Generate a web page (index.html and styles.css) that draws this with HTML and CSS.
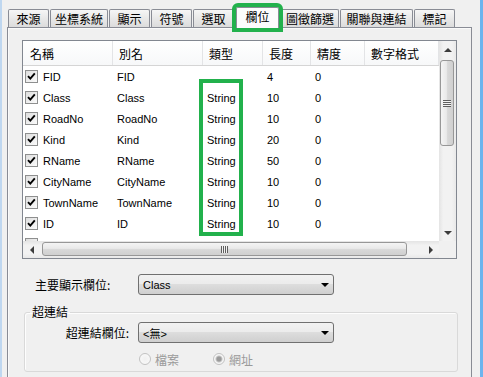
FILE: index.html
```html
<!DOCTYPE html>
<html lang="zh-Hant">
<head>
  <meta charset="UTF-8" />
  <title>圖層屬性 - 欄位</title>
  <link rel="stylesheet" href="styles.css">
</head>
<body>

  <div class="window">

    <!-- Tab strip -->
    <div class="tabs">
      <div class="tab">來源</div>
      <div class="tab tab-wide">坐標系統</div>
      <div class="tab">顯示</div>
      <div class="tab">符號</div>
      <div class="tab">選取</div>
      <div class="tab tab-active">欄位</div>
      <div class="tab tab-wide">圖徵篩選</div>
      <div class="tab tab-wider">關聯與連結</div>
      <div class="tab">標記</div>
    </div>

    <div class="panel">

      <!-- Field list -->
      <div class="listbox">
        <div class="list-view">
          <div class="list-head">
            <div class="head-cell">名稱</div>
            <div class="head-cell">別名</div>
            <div class="head-cell">類型</div>
            <div class="head-cell">長度</div>
            <div class="head-cell">精度</div>
            <div class="head-cell">數字格式</div>
          </div>

          <div class="list-row">
            <div class="cell name-cell"><span class="check"><svg viewBox="0 0 11 11"><path d="M2 5.2 L4.3 7.6 L8.8 2.4" /></svg></span>FID</div>
            <div class="cell">FID</div>
            <div class="cell"></div>
            <div class="cell">4</div>
            <div class="cell">0</div>
            <div class="cell"></div>
          </div>
          <div class="list-row">
            <div class="cell name-cell"><span class="check"><svg viewBox="0 0 11 11"><path d="M2 5.2 L4.3 7.6 L8.8 2.4" /></svg></span>Class</div>
            <div class="cell">Class</div>
            <div class="cell">String</div>
            <div class="cell">10</div>
            <div class="cell">0</div>
            <div class="cell"></div>
          </div>
          <div class="list-row">
            <div class="cell name-cell"><span class="check"><svg viewBox="0 0 11 11"><path d="M2 5.2 L4.3 7.6 L8.8 2.4" /></svg></span>RoadNo</div>
            <div class="cell">RoadNo</div>
            <div class="cell">String</div>
            <div class="cell">10</div>
            <div class="cell">0</div>
            <div class="cell"></div>
          </div>
          <div class="list-row">
            <div class="cell name-cell"><span class="check"><svg viewBox="0 0 11 11"><path d="M2 5.2 L4.3 7.6 L8.8 2.4" /></svg></span>Kind</div>
            <div class="cell">Kind</div>
            <div class="cell">String</div>
            <div class="cell">20</div>
            <div class="cell">0</div>
            <div class="cell"></div>
          </div>
          <div class="list-row">
            <div class="cell name-cell"><span class="check"><svg viewBox="0 0 11 11"><path d="M2 5.2 L4.3 7.6 L8.8 2.4" /></svg></span>RName</div>
            <div class="cell">RName</div>
            <div class="cell">String</div>
            <div class="cell">50</div>
            <div class="cell">0</div>
            <div class="cell"></div>
          </div>
          <div class="list-row">
            <div class="cell name-cell"><span class="check"><svg viewBox="0 0 11 11"><path d="M2 5.2 L4.3 7.6 L8.8 2.4" /></svg></span>CityName</div>
            <div class="cell">CityName</div>
            <div class="cell">String</div>
            <div class="cell">10</div>
            <div class="cell">0</div>
            <div class="cell"></div>
          </div>
          <div class="list-row">
            <div class="cell name-cell"><span class="check"><svg viewBox="0 0 11 11"><path d="M2 5.2 L4.3 7.6 L8.8 2.4" /></svg></span>TownName</div>
            <div class="cell">TownName</div>
            <div class="cell">String</div>
            <div class="cell">10</div>
            <div class="cell">0</div>
            <div class="cell"></div>
          </div>
          <div class="list-row">
            <div class="cell name-cell"><span class="check"><svg viewBox="0 0 11 11"><path d="M2 5.2 L4.3 7.6 L8.8 2.4" /></svg></span>ID</div>
            <div class="cell">ID</div>
            <div class="cell">String</div>
            <div class="cell">10</div>
            <div class="cell">0</div>
            <div class="cell"></div>
          </div>
          <div class="list-row">
            <div class="cell name-cell"><span class="check"></span></div>
          </div>

          <!-- annotation box around the type column -->
          <div class="highlight"></div>
        </div>

        <div class="vscroll">
          <div class="arrow-btn"><span class="arrow arrow-up"></span></div>
          <div class="vthumb"><span class="grip-h"></span></div>
          <div class="track"></div>
          <div class="arrow-btn"><span class="arrow arrow-down"></span></div>
        </div>

        <div class="hscroll">
          <div class="arrow-btn"><span class="arrow arrow-left"></span></div>
          <div class="hthumb"><span class="grip-v"></span></div>
          <div class="track"></div>
          <div class="arrow-btn"><span class="arrow arrow-right"></span></div>
        </div>

        <div class="corner"></div>
      </div>

      <!-- Primary display field -->
      <div class="field-row">
        <div class="field-label">主要顯示欄位:</div>
        <div class="combo">Class<span class="combo-arrow"></span></div>
      </div>

      <!-- Hyperlink group -->
      <fieldset class="group">
        <legend>超連結</legend>
        <div class="field-row field-row-tight">
          <div class="field-label field-label-right">超連結欄位:</div>
          <div class="combo">&lt;無&gt;<span class="combo-arrow"></span></div>
        </div>
        <div class="radio-row">
          <label class="radio-item"><span class="radio"></span>檔案</label>
          <label class="radio-item"><span class="radio radio-on"></span>網址</label>
        </div>
      </fieldset>

    </div>
  </div>

</body>
</html>
```

FILE: styles.css
```css
body {
  margin: 0;
  background-color: #f0f0f0;
  font-family: "Liberation Sans", "Noto Sans CJK TC", sans-serif;
  font-size: 11px;
  color: #000;
}
.window {
  width: 483px;
  height: 377px;
  box-sizing: border-box;
  border-left: 2px solid #bfd7f0;
  border-right: 3px solid #6cb4ee;
  overflow: hidden;
  display: flex;
  flex-direction: column;
}

/* tabs */
.tabs {
  display: flex;
  align-items: flex-end;
  gap: 1px;
  height: 27px;
  flex-shrink: 0;
  padding-left: 6px;
  font-family: "Noto Sans CJK TC", sans-serif;
  font-size: 12px;
}
.tab {
  box-sizing: border-box;
  width: 41px;
  height: 18px;
  border: 1px solid #898c95;
  border-bottom: none;
  border-radius: 2px 2px 0 0;
  background: linear-gradient(#f6f6f6, #e8e8e8 50%, #dcdcdc);
  display: flex;
  align-items: center;
  justify-content: center;
  line-height: 1;
}
.tab-wide {
  width: 58px;
}
.tab-wider {
  width: 73px;
}
.tab-active {
  width: 43px;
  height: 21px;
  margin: 0 1px -1px 1px;
  padding-bottom: 2px;
  background: #fcfcfc;
  position: relative;
  z-index: 1;
  outline: 4px solid #22b14c;
}

/* tab page */
.panel {
  flex: 1;
  margin-left: 5px;
  width: 465px;
  box-sizing: border-box;
  border: 1px solid #898c95;
  border-bottom: none;
  box-shadow: inset 1px 1px #fafafa;
  padding: 12px 0 0 14px;
}

/* list view */
.listbox {
  width: 435px;
  height: 219px;
  box-sizing: border-box;
  border: 1px solid #828790;
  background: #fff;
  display: grid;
  grid-template-columns: 416px 17px;
  grid-template-rows: 200px 17px;
}
.list-view {
  position: relative;
  overflow: hidden;
}
.list-head,
.list-row {
  display: grid;
  grid-template-columns: 90px 90px 60px 48px 54px 1fr;
}
.list-head {
  height: 25px;
  box-sizing: border-box;
  border-bottom: 1px solid #d5d5d5;
  background: linear-gradient(#ffffff, #f7f8f9);
  font-family: "Noto Sans CJK TC", sans-serif;
  font-size: 12px;
}
.head-cell {
  border-right: 1px solid #e3e4e6;
  padding-left: 6px;
  display: flex;
  align-items: center;
}
.head-cell:first-child {
  padding-left: 7px;
}
.list-row {
  height: 21px;
  align-items: center;
}
.cell {
  padding-left: 4px;
  white-space: nowrap;
  padding-top: 1px;
}
.name-cell {
  padding-left: 2px;
  padding-top: 0;
  display: flex;
  align-items: center;
  gap: 5px;
}
.check {
  width: 13px;
  height: 13px;
  box-sizing: border-box;
  border: 1px solid #8e8f8f;
  background: linear-gradient(135deg, #dedede, #fbfbfb);
  display: flex;
  flex-shrink: 0;
}
.check svg {
  width: 11px;
  height: 11px;
}
.check path {
  fill: none;
  stroke: #000;
  stroke-width: 1.9;
}
.highlight {
  position: absolute;
  left: 176px;
  top: 38px;
  width: 44px;
  height: 157px;
  box-sizing: border-box;
  border: 4px solid #22b14c;
}

/* scroll bars */
.vscroll {
  display: flex;
  flex-direction: column;
  background: linear-gradient(90deg, #e4e4e4, #f2f2f2 25%, #f2f2f2 75%, #e9e9e9);
}
.hscroll {
  display: flex;
  background: linear-gradient(#e4e4e4, #f2f2f2 25%, #f2f2f2 75%, #e9e9e9);
}
.corner {
  background: #f0f0f0;
}
.arrow-btn {
  width: 17px;
  height: 17px;
  flex-shrink: 0;
  display: flex;
  align-items: center;
  justify-content: center;
}
.track {
  flex: 1;
}
.arrow {
  width: 0;
  height: 0;
}
.arrow-up {
  border-left: 4px solid transparent;
  border-right: 4px solid transparent;
  border-bottom: 4px solid #3c3c3c;
}
.arrow-down {
  border-left: 4px solid transparent;
  border-right: 4px solid transparent;
  border-top: 4px solid #3c3c3c;
}
.arrow-left {
  border-top: 4px solid transparent;
  border-bottom: 4px solid transparent;
  border-right: 4px solid #3c3c3c;
}
.arrow-right {
  border-top: 4px solid transparent;
  border-bottom: 4px solid transparent;
  border-left: 4px solid #3c3c3c;
}
.vthumb {
  box-sizing: border-box;
  height: 86px;
  width: 14px;
  margin: 2px 0 0 1px;
  border: 1px solid #979797;
  border-radius: 3px;
  background: linear-gradient(90deg, #f4f4f4, #e9e9e9 45%, #d8d8d8 55%, #d0d0d0);
  display: flex;
  align-items: center;
  justify-content: center;
}
.hthumb {
  box-sizing: border-box;
  width: 365px;
  height: 14px;
  margin: 1px 0 0 2px;
  border: 1px solid #979797;
  border-radius: 3px;
  background: linear-gradient(#f4f4f4, #e9e9e9 45%, #d8d8d8 55%, #d0d0d0);
  display: flex;
  align-items: center;
  justify-content: center;
}
.grip-h {
  width: 8px;
  height: 7px;
  background: repeating-linear-gradient(#5f5f5f 0 1px, #f2f2f2 1px 2px);
}
.grip-v {
  width: 7px;
  height: 7px;
  background: repeating-linear-gradient(90deg, #5f5f5f 0 1px, #f2f2f2 1px 2px);
}

/* form rows */
.field-row {
  display: flex;
  align-items: center;
  margin-top: 15px;
}
.field-row-tight {
  margin-top: 3px;
}
.field-label {
  box-sizing: border-box;
  width: 116px;
  padding-left: 13px;
  font-family: "Noto Sans CJK TC", sans-serif;
  font-size: 12px;
}
.field-label-right {
  width: 113px;
  padding: 0 9px 0 0;
  text-align: right;
}
.combo {
  box-sizing: border-box;
  width: 196px;
  height: 21px;
  border: 1px solid #707070;
  border-radius: 3px;
  background: linear-gradient(#f2f2f2, #ebebeb 50%, #dddddd 50%, #cfcfcf);
  display: flex;
  align-items: center;
  padding-left: 4px;
  font-family: "Liberation Sans", "Noto Sans CJK TC", sans-serif;
}
.combo-arrow {
  margin-left: auto;
  margin-right: 4px;
  width: 0;
  height: 0;
  border-left: 4px solid transparent;
  border-right: 4px solid transparent;
  border-top: 4px solid #000;
}

/* hyperlink group */
.group {
  width: 434px;
  box-sizing: border-box;
  margin: 10px 0 0 2px;
  padding: 0 0 5px 0;
  border: 1px solid #d9d9d9;
  border-radius: 3px;
  box-shadow: inset 1px 1px #fdfdfd;
}
.group legend {
  margin-left: 5px;
  padding: 0 2px;
  font-family: "Noto Sans CJK TC", sans-serif;
  font-size: 12px;
  line-height: 14px;
}
.radio-row {
  display: flex;
  align-items: center;
  gap: 34px;
  height: 14px;
  margin: 9px 0 0 114px;
}
.radio-item {
  display: flex;
  align-items: center;
  gap: 4px;
  color: #9a9a9a;
  font-family: "Noto Sans CJK TC", sans-serif;
  font-size: 12px;
}
.radio {
  width: 12px;
  height: 12px;
  box-sizing: border-box;
  border-radius: 50%;
  border: 1px solid #c2c2c2;
  background: radial-gradient(circle, #f0f0f0, #fbfbfb);
}
.radio-on {
  background: radial-gradient(circle, #9a9a9a 0 2px, #c4c4c4 3px, #f6f6f6 4px);
}
```
